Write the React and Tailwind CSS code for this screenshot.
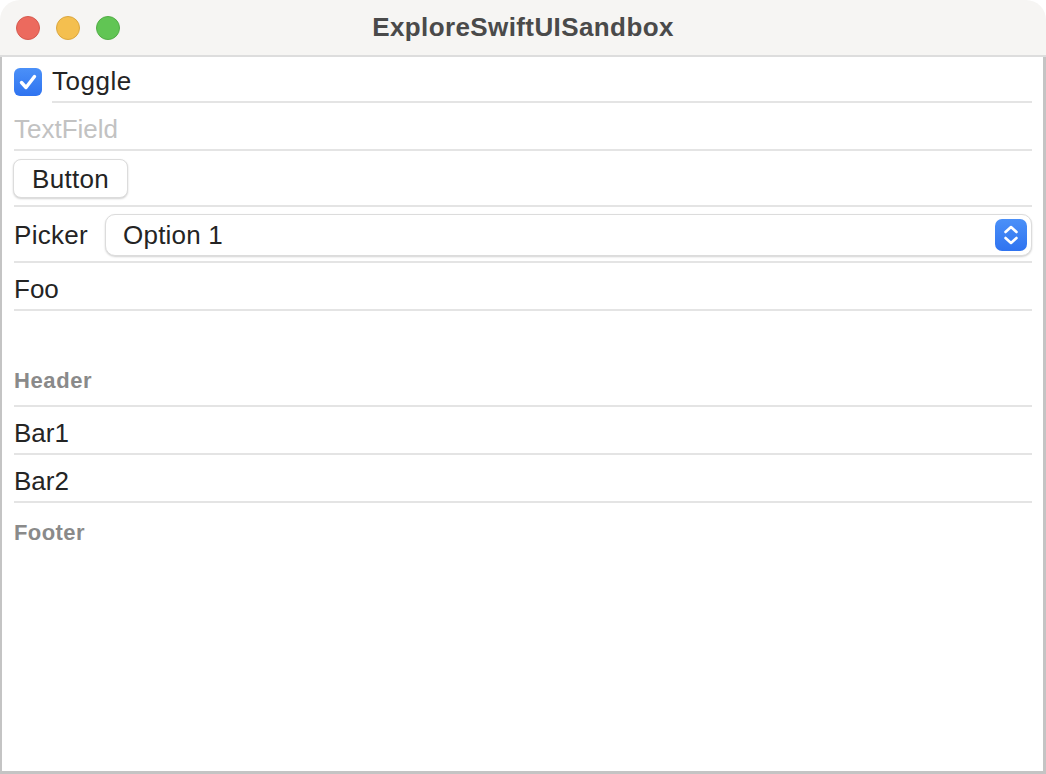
import React from "react";

function Checkbox() {
  return (
    <div className="w-7 h-7 mt-1 shrink-0 rounded-[6px] bg-gradient-to-b from-[#4b90f8] to-[#2f73f0] flex items-center justify-center">
      <svg width="28" height="28" viewBox="0 0 28 28">
        <path
          d="M7.5 14.5 L12 19.5 L20.5 8.5"
          fill="none"
          stroke="white"
          strokeWidth="3.4"
          strokeLinecap="round"
          strokeLinejoin="round"
        />
      </svg>
    </div>
  );
}

function Stepper() {
  return (
    <div className="w-8 h-8 rounded-[7px] bg-gradient-to-b from-[#4b90f8] to-[#2f73f0] flex items-center justify-center">
      <svg width="32" height="32" viewBox="0 0 32 32">
        <path
          d="M10.5 13 L16 8 L21.5 13 M10.5 19 L16 24 L21.5 19"
          fill="none"
          stroke="white"
          strokeWidth="2.6"
          strokeLinecap="round"
          strokeLinejoin="round"
        />
      </svg>
    </div>
  );
}

function App() {
  return (
    <div className="w-[1046px] h-[774px] bg-white text-[26px] leading-none text-[#242424] font-['Liberation_Sans',Arial,sans-serif]">
      <div className="flex flex-col h-full">
        <header className="relative h-[57px] shrink-0 rounded-t-[20px] bg-[#f6f5f3] border-b-2 border-[#dddddd] flex items-center justify-center">
          <div className="absolute left-4 top-4 flex gap-4">
            <span className="w-6 h-6 rounded-full bg-[#ec6a5e] border border-[#d65a4f]" />
            <span className="w-6 h-6 rounded-full bg-[#f4bf4f] border border-[#dba73f]" />
            <span className="w-6 h-6 rounded-full bg-[#61c554] border border-[#52ad46]" />
          </div>
          <h1 className="font-bold text-[26px] tracking-[0.4px] text-[#4a4a4a] mt-[-2px]">
            ExploreSwiftUISandbox
          </h1>
        </header>

        <main className="flex-1 flex flex-col border-l-2 border-r-[3px] border-b-[3px] border-[#c4c4c4] pl-3 pr-[11px]">
          <div className="flex items-center h-[46px]">
            <Checkbox />
            <div className="ml-[10px] flex-1 h-full flex items-center border-b-2 border-[#e4e4e4]">
              <span className="mt-1 tracking-[0.5px]">Toggle</span>
            </div>
          </div>

          <div className="h-[48px] flex items-center border-b-2 border-[#e4e4e4]">
            <span className="text-[#c2c2c2] mt-[6px]">TextField</span>
          </div>

          <div className="h-[56px] flex items-center border-b-2 border-[#e4e4e4]">
            <button className="h-[39px] px-[18px] -ml-px mt-px rounded-[8px] bg-white border border-[#dcdcdc] shadow-[0_1px_2px_rgba(0,0,0,0.18)] text-[#242424] tracking-[0.3px]">
              Button
            </button>
          </div>

          <div className="h-[56px] flex items-center gap-[17px] border-b-2 border-[#e4e4e4]">
            <span className="mt-[2px] tracking-[0.3px]">Picker</span>
            <div className="flex-1 h-[42px] mt-[2px] rounded-[10px] bg-white border border-[#dcdcdc] shadow-[0_1px_2px_rgba(0,0,0,0.18)] flex items-center justify-between pl-[17px] pr-[4px]">
              <span className="tracking-[0.2px]">Option 1</span>
              <Stepper />
            </div>
          </div>

          <div className="h-[48px] flex items-center border-b-2 border-[#e4e4e4]">
            <span className="mt-[6px]">Foo</span>
          </div>

          <div className="h-[96px] flex items-end pb-[13px] border-b-2 border-[#e4e4e4]">
            <span className="text-[22px] font-bold text-[#8a8a8a] tracking-[0.6px]">Header</span>
          </div>

          <div className="h-[48px] flex items-center border-b-2 border-[#e4e4e4]">
            <span className="mt-[6px]">Bar1</span>
          </div>

          <div className="h-[48px] flex items-center border-b-2 border-[#e4e4e4]">
            <span className="mt-[6px]">Bar2</span>
          </div>

          <div className="pt-[15px]">
            <span className="text-[22px] font-bold text-[#8a8a8a] tracking-[0.4px]">Footer</span>
          </div>
        </main>
      </div>
    </div>
  );
}

export default App;
